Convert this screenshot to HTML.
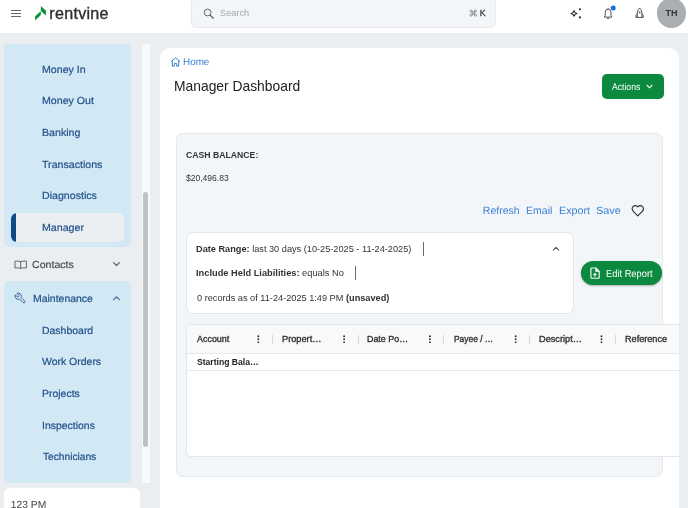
<!DOCTYPE html>
<html><head><meta charset="utf-8">
<style>
*{box-sizing:border-box;margin:0;padding:0}
html,body{width:688px;height:508px;overflow:hidden}
body{will-change:transform;position:relative;background:#eaeef1;font-family:"Liberation Sans",sans-serif;color:#333}
.a{position:absolute;white-space:nowrap}
.t{position:absolute;white-space:nowrap;line-height:1}
#hdr{left:0;top:0;width:688px;height:33px;background:#fff}
.sb{background:#d3e8f5}
.nav{font-size:10.3px;color:#21538c}
.lnk{font-size:10.2px;color:#3b7fd4}
.th{font-size:9px;color:#333}
</style></head><body>
<!-- header -->
<div id="hdr" class="a"></div>
<div class="a" style="left:11px;top:10px;width:10px;height:1.1px;background:#666"></div>
<div class="a" style="left:11px;top:13px;width:10px;height:1.1px;background:#666"></div>
<div class="a" style="left:11px;top:16px;width:10px;height:1.1px;background:#666"></div>
<svg class="a" style="left:0;top:0" width="60" height="30" viewBox="0 0 60 30">
<path d="M40.8 5.9 L46 10.7 L45.8 15.4 L40.8 11.1 Z" fill="#0c8f3c"/>
<path d="M40.8 11.3 L40.8 15 L35.2 20.6 L35.2 16.3 Z" fill="#0c8f3c"/>
</svg>

<div class="a" style="left:191px;top:-3px;width:305px;height:30.5px;background:#f3f6f9;border:1px solid #e7ebef;border-radius:5px"></div>
<svg class="a" style="left:202px;top:7px" width="13" height="13" viewBox="0 0 13 13">
<circle cx="5.6" cy="5.5" r="3.4" fill="none" stroke="#5c5c5c" stroke-width="0.95"/>
<path d="M8.1 8.1 L11.3 11.2" stroke="#5a5a5a" stroke-width="1.2" stroke-linecap="round"/>
</svg>

<!-- header icons -->
<svg class="a" style="left:0;top:0" width="688" height="33" viewBox="0 0 688 33">
<path d="M571 13.4 Q573.4 13 574 10.6 Q574.6 13 577 13.4 Q574.6 13.8 574 16.2 Q573.4 13.8 571 13.4 Z" fill="none" stroke="#222" stroke-width="1.05" stroke-linejoin="round"/>
<circle cx="579.9" cy="9.3" r="1.05" fill="#222"/>
<circle cx="579.9" cy="17.4" r="1.05" fill="#222"/>
<path d="M605.2 15.6 V12.2 A2.9 3 0 0 1 611 12.2 V15.6 L612 17.1 H604.2 Z" fill="none" stroke="#555" stroke-width="1" stroke-linejoin="round"/>
<path d="M608.1 8.3 V9.3 M607.2 18.3 H609" stroke="#555" stroke-width="1" stroke-linecap="round"/>
<circle cx="613.2" cy="8.0" r="2.5" fill="#1a6fd8"/>
<path d="M639.6 8.1 C641.5 9.6 642 12 641.9 14.5 V17.4 H637.3 V14.5 C637.2 12 637.7 9.6 639.6 8.1 Z M637.3 13.6 L635.9 15.6 V17.4 H637.3 M641.9 13.6 L643.3 15.6 V17.4 H641.9" fill="none" stroke="#444" stroke-width="0.95" stroke-linejoin="round"/>
<circle cx="639.6" cy="12.4" r="0.85" fill="#444"/>
</svg>
<div class="a" style="left:656.8px;top:-1.6px;width:29.4px;height:29.4px;border-radius:50%;background:#a9aeb1"></div>

<!-- sidebar -->
<div class="a sb" style="left:4px;top:44px;width:127px;height:203px;border-radius:0 0 5px 5px"></div>
<div class="a" style="left:11px;top:213px;width:113px;height:29px;border-radius:6px;background:#eceff2;overflow:hidden"><div class="a" style="left:0;top:0;width:5px;height:30px;background:#0f4a86"></div></div>

<svg class="a" style="left:13.8px;top:259.6px" width="13.4" height="9.3" viewBox="0 0 14 11" preserveAspectRatio="none">
<path d="M7 2 Q4 0.8 1 1.4 V9.4 Q4 8.8 7 10 Q10 8.8 13 9.4 V1.4 Q10 0.8 7 2 Z M7 2 V10" fill="none" stroke="#555" stroke-width="1"/>
</svg>
<svg class="a" style="left:0;top:0" width="160" height="508" viewBox="0 0 160 508"><path d="M113.6 262.7 L116.5 265.5 L119.4 262.7" fill="none" stroke="#5e5e5e" stroke-width="1.15" stroke-linecap="round" stroke-linejoin="round"/></svg>

<div class="a sb" style="left:4px;top:281px;width:127px;height:202px;border-radius:5px 5px 0 0"></div>
<svg class="a" style="left:14.0px;top:292.4px" width="12.6" height="12.6" viewBox="0 0 24 24"><g transform="translate(24,0) scale(-1,1)"><path d="M14.7 6.3a1 1 0 0 0 0 1.4l1.6 1.6a1 1 0 0 0 1.4 0l3.77-3.77a6 6 0 0 1-7.94 7.94l-6.91 6.91a2.12 2.12 0 0 1-3-3l6.91-6.91a6 6 0 0 1 7.94-7.94l-3.76 3.76z" fill="none" stroke="#2f5a90" stroke-width="1.8" stroke-linejoin="round"/></g></svg>
<svg class="a" style="left:0;top:0" width="160" height="508" viewBox="0 0 160 508"><path d="M113.6 299.6 L116.5 296.8 L119.4 299.6" fill="none" stroke="#3c6596" stroke-width="1.15" stroke-linecap="round" stroke-linejoin="round"/></svg>

<div class="a" style="left:142px;top:44px;width:7.5px;height:439px;background:#f9f9f9"></div>
<div class="a" style="left:143px;top:192.4px;width:5.4px;height:254.6px;border-radius:3px;background:#c1c1c1"></div>

<div class="a" style="left:4px;top:488px;width:136px;height:40px;border-radius:6px;background:#fff"></div>

<!-- main panel -->
<div class="a" style="left:160px;top:47.7px;width:519px;height:480px;border-radius:10px;background:#fff;overflow:hidden">
</div>
<svg class="a" style="left:170px;top:57px" width="11" height="10" viewBox="0 0 11 10">
<path d="M1 4.6 L5.5 0.8 L10 4.6 M2.3 3.6 V9.2 H4.3 V6.4 H6.7 V9.2 H8.7 V3.6" fill="none" stroke="#3b7fd4" stroke-width="1" stroke-linejoin="round"/>
</svg>

<div class="a" style="left:602px;top:74px;width:62.2px;height:24.7px;border-radius:5px;background:#0b893e"></div>
<svg class="a" style="left:646.2px;top:84.3px" width="7" height="5" viewBox="0 0 7 5"><path d="M0.8 1 L3.5 3.8 L6.2 1" fill="none" stroke="#fff" stroke-width="1.1"/></svg>

<!-- card -->
<div class="a" style="left:176px;top:133px;width:487px;height:344px;border-radius:7px;background:#f3f6f9;border:1px solid #e4e9ed"></div>

<svg class="a" style="left:630.5px;top:204.0px" width="13.6" height="13.6" viewBox="0 0 24 24"><path d="M19 14c1.49-1.46 3-3.21 3-5.5A5.5 5.5 0 0 0 16.5 3c-1.76 0-3 .5-4.5 2-1.5-1.5-2.74-2-4.5-2A5.5 5.5 0 0 0 2 8.5c0 2.3 1.5 4.05 3 5.5l7 7Z" fill="none" stroke="#333" stroke-width="2.1" stroke-linejoin="round"/></svg>

<div class="a" style="left:186px;top:232px;width:388px;height:82px;border-radius:7px;background:#fff;border:1px solid #e2e6ea"></div>
<div class="a" style="left:423.2px;top:242px;width:1.2px;height:13.5px;background:#6a6a6a"></div>
<div class="a" style="left:354.5px;top:266px;width:1.2px;height:13.8px;background:#6a6a6a"></div>
<svg class="a" style="left:0;top:0" width="688" height="508" viewBox="0 0 688 508"><path d="M553.3 250.1 L556 247.4 L558.7 250.1" fill="none" stroke="#555" stroke-width="1.1" stroke-linecap="round" stroke-linejoin="round"/></svg>

<div class="a" style="left:581px;top:261.2px;width:81px;height:24.2px;border-radius:12px;background:#0b893e;box-shadow:0 1px 2px rgba(0,0,0,0.3)"></div>
<svg class="a" style="left:0;top:0" width="688" height="508" viewBox="0 0 688 508">
<path d="M591.6 268 H595.9 L599.2 271.3 V277.6 Q599.2 278.3 598.5 278.3 H591.6 Q590.9 278.3 590.9 277.6 V268.7 Q590.9 268 591.6 268 Z" fill="none" stroke="#fff" stroke-width="1.1" stroke-linejoin="round"/>
<path d="M595.6 268.2 V271.6 H599 Z" fill="#fff" stroke="#fff" stroke-width="0.6" stroke-linejoin="round"/>
<path d="M594.9 272.7 L597 275.1 H592.8 Z" fill="#fff"/>
<rect x="594.3" y="274.6" width="1.2" height="2" fill="#fff"/>
</svg>

<!-- table -->
<div class="a" style="left:186px;top:324px;width:520px;height:133px;border:1px solid #e2e6ea;border-radius:5px;background:#fff;overflow:hidden">
  <div class="a" style="left:0;top:0;width:520px;height:29px;background:#f9f9fa;border-bottom:1px solid #e6e8eb"></div>
  <div class="a" style="left:0;top:44.5px;width:520px;height:1px;background:#e6e8eb"></div>
</div>

<div class="a" style="left:271.7px;top:335px;width:1px;height:8.5px;background:#d5d8dc"></div>
<div class="a" style="left:357.5px;top:335px;width:1px;height:8.5px;background:#d5d8dc"></div>
<div class="a" style="left:443.3px;top:335px;width:1px;height:8.5px;background:#d5d8dc"></div>
<div class="a" style="left:529.1px;top:335px;width:1px;height:8.5px;background:#d5d8dc"></div>
<div class="a" style="left:614.9px;top:335px;width:1px;height:8.5px;background:#d5d8dc"></div>
<div class="a" style="left:700.7px;top:335px;width:1px;height:8.5px;background:#d5d8dc"></div>
<svg class="a" style="left:0;top:0" width="688" height="508" viewBox="0 0 688 508"><circle cx="258.30" cy="336.20" r="0.95" fill="#2a2a2a"/><circle cx="258.30" cy="339.15" r="0.95" fill="#2a2a2a"/><circle cx="258.30" cy="342.10" r="0.95" fill="#2a2a2a"/><circle cx="344.10" cy="336.20" r="0.95" fill="#2a2a2a"/><circle cx="344.10" cy="339.15" r="0.95" fill="#2a2a2a"/><circle cx="344.10" cy="342.10" r="0.95" fill="#2a2a2a"/><circle cx="429.90" cy="336.20" r="0.95" fill="#2a2a2a"/><circle cx="429.90" cy="339.15" r="0.95" fill="#2a2a2a"/><circle cx="429.90" cy="342.10" r="0.95" fill="#2a2a2a"/><circle cx="515.70" cy="336.20" r="0.95" fill="#2a2a2a"/><circle cx="515.70" cy="339.15" r="0.95" fill="#2a2a2a"/><circle cx="515.70" cy="342.10" r="0.95" fill="#2a2a2a"/><circle cx="601.50" cy="336.20" r="0.95" fill="#2a2a2a"/><circle cx="601.50" cy="339.15" r="0.95" fill="#2a2a2a"/><circle cx="601.50" cy="342.10" r="0.95" fill="#2a2a2a"/><circle cx="687.30" cy="336.20" r="0.95" fill="#2a2a2a"/><circle cx="687.30" cy="339.15" r="0.95" fill="#2a2a2a"/><circle cx="687.30" cy="342.10" r="0.95" fill="#2a2a2a"/></svg>
<div class="t" style="left:220.35px;top:9.00px;font-size:8.80px;font-weight:normal;color:#a3a7ab;transform:scaleX(1.046);transform-origin:0 0;">Search</div>
<div class="t" style="left:479.80px;top:9.00px;font-size:8.80px;font-weight:normal;color:#3a3a3a;-webkit-text-stroke:0.3px #3a3a3a;">K</div>
<div class="t" style="left:665.60px;top:9.00px;font-size:9.00px;font-weight:bold;color:#333;">TH</div>
<div class="t" style="left:41.77px;top:66.00px;font-size:10.30px;font-weight:normal;color:#22528b;transform:scaleX(1.032);transform-origin:0 0;text-rendering:geometricPrecision;-webkit-text-stroke:0.2px #22528b;">Money In</div>
<div class="t" style="left:41.77px;top:97.00px;font-size:10.30px;font-weight:normal;color:#22528b;transform:scaleX(1.032);transform-origin:0 0;text-rendering:geometricPrecision;-webkit-text-stroke:0.2px #22528b;">Money Out</div>
<div class="t" style="left:41.77px;top:129.00px;font-size:10.30px;font-weight:normal;color:#22528b;transform:scaleX(1.032);transform-origin:0 0;text-rendering:geometricPrecision;-webkit-text-stroke:0.2px #22528b;">Banking</div>
<div class="t" style="left:41.77px;top:161.00px;font-size:10.30px;font-weight:normal;color:#22528b;transform:scaleX(1.032);transform-origin:0 0;text-rendering:geometricPrecision;-webkit-text-stroke:0.2px #22528b;">Transactions</div>
<div class="t" style="left:41.77px;top:192.00px;font-size:10.30px;font-weight:normal;color:#22528b;transform:scaleX(1.032);transform-origin:0 0;text-rendering:geometricPrecision;-webkit-text-stroke:0.2px #22528b;">Diagnostics</div>
<div class="t" style="left:41.77px;top:224.00px;font-size:10.30px;font-weight:normal;color:#22528b;transform:scaleX(1.032);transform-origin:0 0;text-rendering:geometricPrecision;-webkit-text-stroke:0.2px #22528b;">Manager</div>
<div class="t" style="left:32.02px;top:261.00px;font-size:10.30px;font-weight:normal;color:#474747;transform:scaleX(1.029);transform-origin:0 0;text-rendering:geometricPrecision;-webkit-text-stroke:0.15px #474747;">Contacts</div>
<div class="t" style="left:32.58px;top:295.00px;font-size:10.30px;font-weight:normal;color:#22528b;transform:scaleX(1.016);transform-origin:0 0;text-rendering:geometricPrecision;-webkit-text-stroke:0.2px #22528b;">Maintenance</div>
<div class="t" style="left:41.98px;top:327.00px;font-size:10.30px;font-weight:normal;color:#22528b;transform:scaleX(1.016);transform-origin:0 0;text-rendering:geometricPrecision;-webkit-text-stroke:0.2px #22528b;">Dashboard</div>
<div class="t" style="left:41.98px;top:358.00px;font-size:10.30px;font-weight:normal;color:#22528b;transform:scaleX(1.016);transform-origin:0 0;text-rendering:geometricPrecision;-webkit-text-stroke:0.2px #22528b;">Work Orders</div>
<div class="t" style="left:41.98px;top:390.00px;font-size:10.30px;font-weight:normal;color:#22528b;transform:scaleX(1.016);transform-origin:0 0;text-rendering:geometricPrecision;-webkit-text-stroke:0.2px #22528b;">Projects</div>
<div class="t" style="left:41.98px;top:422.00px;font-size:10.30px;font-weight:normal;color:#22528b;transform:scaleX(1.016);transform-origin:0 0;text-rendering:geometricPrecision;-webkit-text-stroke:0.2px #22528b;">Inspections</div>
<div class="t" style="left:43.30px;top:453.00px;font-size:10.30px;font-weight:normal;color:#22528b;transform:scaleX(0.989);transform-origin:0 0;text-rendering:geometricPrecision;-webkit-text-stroke:0.2px #22528b;">Technicians</div>
<div class="t" style="left:10.80px;top:501.00px;font-size:10.30px;font-weight:normal;color:#444;text-rendering:geometricPrecision;">123 PM</div>
<div class="t" style="left:183.01px;top:58.00px;font-size:10.00px;font-weight:normal;color:#3b80d6;transform:scaleX(0.988);transform-origin:0 0;text-rendering:geometricPrecision;">Home</div>
<div class="t" style="left:174.12px;top:79.00px;font-size:14.20px;font-weight:normal;color:#222;transform:scaleX(0.976);transform-origin:0 0;">Manager Dashboard</div>
<div class="t" style="left:612.10px;top:83.00px;font-size:9.70px;font-weight:normal;color:#fff;transform:scaleX(0.890);transform-origin:0 0;text-rendering:geometricPrecision;">Actions</div>
<div class="t" style="left:186.00px;top:151.00px;font-size:9.00px;font-weight:bold;color:#333;transform:scaleX(0.964);transform-origin:0 0;">CASH BALANCE:</div>
<div class="t" style="left:186.10px;top:174.00px;font-size:8.80px;font-weight:normal;color:#333;transform:scaleX(0.970);transform-origin:0 0;">$20,496.83</div>
<div class="t" style="left:482.80px;top:206.00px;font-size:10.50px;font-weight:normal;color:#3b80d6;text-rendering:geometricPrecision;">Refresh</div>
<div class="t" style="left:526.10px;top:206.00px;font-size:10.50px;font-weight:normal;color:#3b80d6;text-rendering:geometricPrecision;">Email</div>
<div class="t" style="left:558.98px;top:206.00px;font-size:10.50px;font-weight:normal;color:#3b80d6;transform:scaleX(1.021);transform-origin:0 0;text-rendering:geometricPrecision;">Export</div>
<div class="t" style="left:596.36px;top:206.00px;font-size:10.50px;font-weight:normal;color:#3b80d6;transform:scaleX(1.036);transform-origin:0 0;text-rendering:geometricPrecision;">Save</div>
<div class="t" style="left:196.00px;top:245.00px;font-size:9.20px;font-weight:normal;color:#333;"><b>Date Range:</b> last 30 days (10-25-2025 - 11-24-2025)</div>
<div class="t" style="left:195.99px;top:269.00px;font-size:9.20px;font-weight:normal;color:#333;transform:scaleX(1.009);transform-origin:0 0;"><b>Include Held Liabilities:</b> equals No</div>
<div class="t" style="left:197.00px;top:294.00px;font-size:9.20px;font-weight:normal;color:#333;">0 records as of 11-24-2025 1:49 PM <b>(unsaved)</b></div>
<div class="t" style="left:606.00px;top:270.00px;font-size:10.30px;font-weight:normal;color:#fff;transform:scaleX(0.904);transform-origin:0 0;text-rendering:geometricPrecision;">Edit Report</div>
<div class="t" style="left:197.00px;top:335.00px;font-size:8.80px;font-weight:normal;color:#333;transform:scaleX(1.016);transform-origin:0 0;-webkit-text-stroke:0.35px #333;">Account</div>
<div class="t" style="left:281.95px;top:335.00px;font-size:8.80px;font-weight:normal;color:#333;transform:scaleX(1.049);transform-origin:0 0;-webkit-text-stroke:0.35px #333;">Propert…</div>
<div class="t" style="left:367.29px;top:335.00px;font-size:8.80px;font-weight:normal;color:#333;transform:scaleX(1.011);transform-origin:0 0;-webkit-text-stroke:0.35px #333;">Date Po…</div>
<div class="t" style="left:453.74px;top:335.00px;font-size:8.80px;font-weight:normal;color:#333;transform:scaleX(0.956);transform-origin:0 0;-webkit-text-stroke:0.35px #333;">Payee / …</div>
<div class="t" style="left:539.16px;top:335.00px;font-size:8.80px;font-weight:normal;color:#333;transform:scaleX(1.044);transform-origin:0 0;-webkit-text-stroke:0.35px #333;">Descript…</div>
<div class="t" style="left:624.66px;top:335.00px;font-size:8.80px;font-weight:normal;color:#333;transform:scaleX(1.036);transform-origin:0 0;-webkit-text-stroke:0.35px #333;">Reference</div>
<div class="t" style="left:196.82px;top:358.00px;font-size:8.80px;font-weight:bold;color:#222;transform:scaleX(0.977);transform-origin:0 0;">Starting Bala…</div>
<svg class="a" style="left:469.0px;top:9.3px" width="8.6" height="8.2" viewBox="0 0 24 24" preserveAspectRatio="none"><path d="M15 6v12a3 3 0 1 0 3-3H6a3 3 0 1 0 3 3V6a3 3 0 1 0-3 3h12a3 3 0 1 0-3-3" fill="none" stroke="#8a8a8a" stroke-width="2.6"/></svg>
<div class="t" style="left:49.3px;top:5.4px;font-size:16.1px;color:#2e2e2e;letter-spacing:0.28px;-webkit-text-stroke:0.35px #2e2e2e">rentvine</div>
<!-- right page strip -->
<div class="a" style="left:679px;top:33px;width:9px;height:475px;background:#eaeef1"></div>
</body></html>
